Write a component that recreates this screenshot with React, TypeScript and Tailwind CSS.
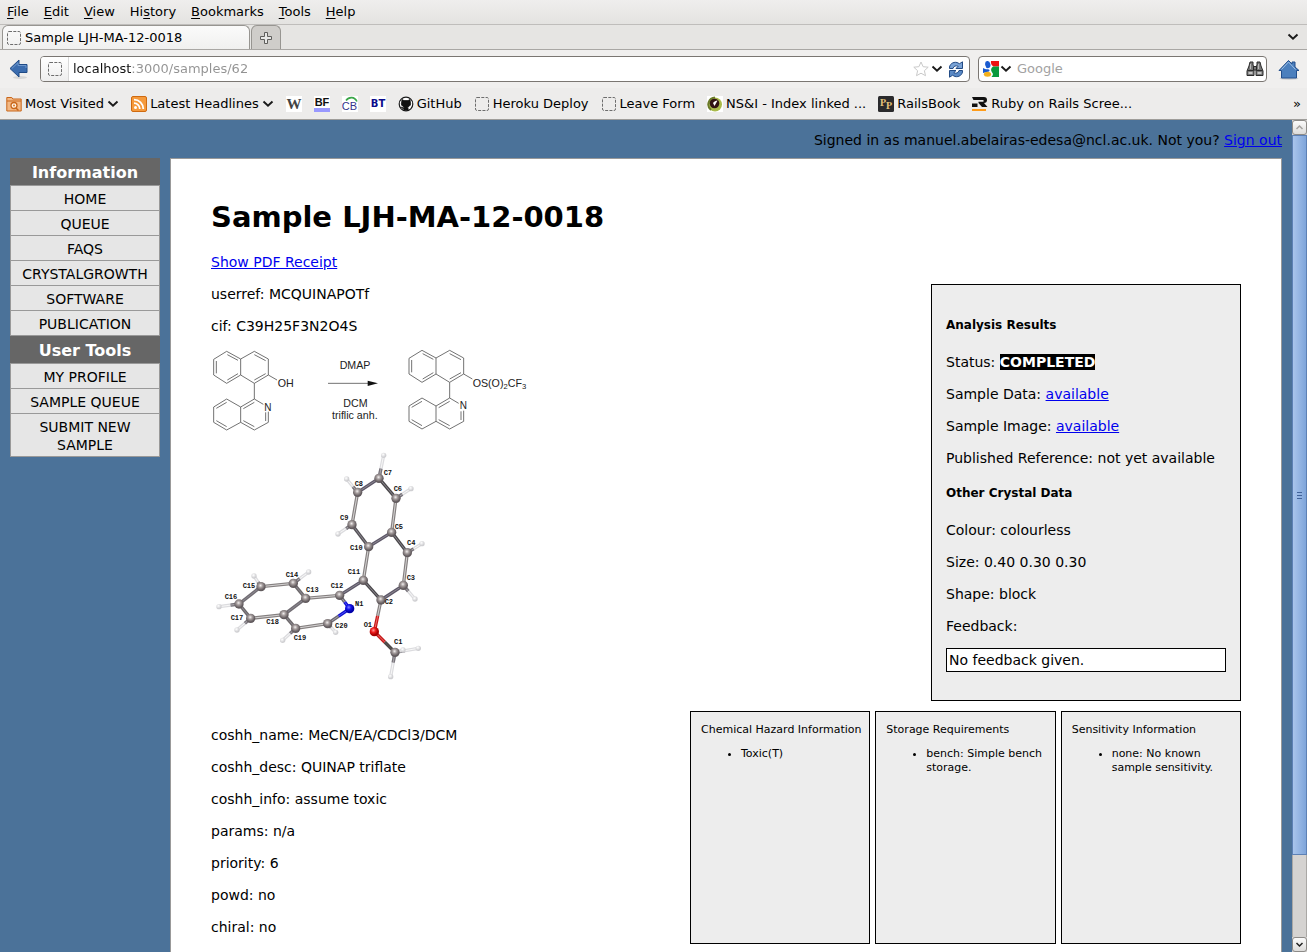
import React from "react";

type Point = [number, number];

const menus: [string, string, string][] = [
  ["", "F", "ile"],
  ["", "E", "dit"],
  ["", "V", "iew"],
  ["Hi", "s", "tory"],
  ["", "B", "ookmarks"],
  ["", "T", "ools"],
  ["", "H", "elp"],
];

function Chevron() {
  return (
    <svg width="12" height="12" viewBox="0 0 12 12" className="shrink-0">
      <path d="M1.500 3.500 6 7.800l4.500-4.300" fill="none" stroke="#1a1a1a" strokeWidth="1.900" />
    </svg>
  );
}

function DashedPage() {
  return (
    <svg width="16" height="16" viewBox="0 0 16 16" className="shrink-0">
      <rect x="1.5" y="1.5" width="13" height="13" rx="1.5" fill="none" stroke="#6d6d6d" strokeDasharray="3 1.3" />
    </svg>
  );
}

function BackIcon() {
  return (
    <svg width="20" height="22" viewBox="0 0 20 22">
      <ellipse cx="11" cy="19.5" rx="7" ry="1.5" fill="#d6d6d6" />
      <path d="M1 10.500 10 2v4.500h8v8h-8V19z" fill="#3b6cae" stroke="#1f4a86" strokeLinejoin="round" />
      <path d="M2.800 10.500 9 4.700V7.500h8V10" fill="none" stroke="#6f98cd" />
    </svg>
  );
}

function StarIcon() {
  return (
    <svg width="16" height="16" viewBox="0 0 16 16">
      <path d="m8 1 2.100 4.700 5.100.5-3.800 3.500 1.100 5L8 12.200l-4.500 2.500 1.100-5L.8 6.200l5.100-.5z" fill="#fff" stroke="#c9c9c9" strokeLinejoin="round" />
    </svg>
  );
}

function ReloadIcon() {
  return (
    <svg width="16" height="17" viewBox="0 0 16 17">
      <path d="M1.500 7.500C1 3.500 5 .5 9 1.500l2.500 1.200L14.500.8v6.700H8l2.200-2.200C8 4.200 5.500 5 5 7.500z" fill="#7aa3d6" stroke="#234b85" strokeLinejoin="round" />
      <path d="M14.500 9.500c.5 4-3.500 7-7.500 6l-2.500-1.200-3 1.900V9.500H8l-2.200 2.200c2.200 1.100 4.700.3 5.200-2.200z" fill="#5b8ac6" stroke="#234b85" strokeLinejoin="round" />
    </svg>
  );
}

function GoogleIcon() {
  return (
    <svg width="16" height="16" viewBox="0 0 16 16">
      <rect width="16" height="16" fill="#fff" />
      <path d="M8 0h8v5.500h-5.500C8.500 4.500 7.500 2 8 0" fill="#ee1111" />
      <path d="M10 5.500h6V16H8.500c2-2 1.800-3.500.3-5C7.500 9 8 7 10 5.500" fill="#0a9a3c" />
      <ellipse cx="4.800" cy="3.600" rx="2.600" ry="3.600" transform="rotate(-12 4.800 3.600)" fill="#1a5bd0" />
      <path d="M0 7c2 1.600 4 1.200 6 1.500 1 1 .5 2-1 2.300L0 12z" fill="#1a5bd0" />
      <ellipse cx="4.500" cy="13.200" rx="3.600" ry="2.500" fill="#f3b01c" />
    </svg>
  );
}

function BinocularsIcon() {
  return (
    <svg width="18" height="16" viewBox="0 0 18 16">
      <g fill="#777" stroke="#2b2b2b" strokeLinejoin="round">
        <path d="M4 1h3v3l1 2v8.500H1V10l2-5zM14 1h-3v3l-1 2v8.500h7V10l-2-5z" />
        <path d="M7.500 5.500h3V9h-3z" />
      </g>
      <path d="M1.500 9.500h6M10.500 9.500h6" stroke="#2b2b2b" />
      <path d="M2.500 12h4M11.500 12h4" stroke="#c4c4c4" strokeWidth="2" />
      <path d="M4.500 3v5M12.500 3v5" stroke="#bbb" />
    </svg>
  );
}

function HomeIcon() {
  return (
    <svg width="22" height="21" viewBox="0 0 22 21">
      <ellipse cx="11" cy="19.500" rx="9.500" ry="1.500" fill="#d2d2d2" />
      <path d="M1 11.500 10.500 1.500l3.500 3.500V3h3v5l4 3.500h-2.500V19h-15v-7.500z" fill="#4b7fbd" stroke="#234f8c" strokeLinejoin="round" />
      <path d="M3.500 10.500 10.500 3l7 7.500" fill="none" stroke="#9fc0e6" />
    </svg>
  );
}

function MostVisitedIcon() {
  return (
    <svg width="16" height="16" viewBox="0 0 16 16" className="shrink-0">
      <path d="M.8 1.500h5l1 1.500h8.400v12H.8z" fill="#f3b884" stroke="#c9661a" />
      <path d="M1 5h14" stroke="#c9661a" />
      <circle cx="8" cy="9.500" r="3" fill="#fff2e2" stroke="#c9661a" strokeWidth="1.300" />
      <path d="m10 12 2.500 2.500" stroke="#c9661a" strokeWidth="1.500" />
      <circle cx="8" cy="9.500" r="1" fill="#d97a2a" />
    </svg>
  );
}

function FeedIcon() {
  return (
    <svg width="16" height="16" viewBox="0 0 16 16" className="shrink-0">
      <rect x=".5" y=".5" width="15" height="15" rx="1.500" fill="#f59a3c" stroke="#cf6a10" />
      <circle cx="4.500" cy="11.500" r="1.500" fill="#fff" />
      <path d="M3 7.200A5.800 5.800 0 0 1 8.800 13M3 3.700A9.300 9.300 0 0 1 12.300 13" fill="none" stroke="#fff" strokeWidth="1.800" />
    </svg>
  );
}

function WikiIcon() {
  return (
    <svg width="16" height="16" viewBox="0 0 16 16" className="shrink-0">
      <rect width="16" height="16" fill="#fff" />
      <text x="8" y="13" textAnchor="middle" fontFamily="Liberation Serif, serif" fontWeight="700" fontSize="15" fill="#444">W</text>
    </svg>
  );
}

function BfIcon() {
  return (
    <svg width="16" height="16" viewBox="0 0 16 16" className="shrink-0">
      <rect width="16" height="16" fill="#fff" />
      <rect y="12" width="16" height="4" fill="#9999ff" />
      <text x="8" y="10" textAnchor="middle" fontFamily="Liberation Sans, sans-serif" fontWeight="700" fontSize="11" fill="#111">BF</text>
    </svg>
  );
}

function CbIcon() {
  return (
    <svg width="16" height="16" viewBox="0 0 16 16" className="shrink-0">
      <rect width="16" height="16" fill="#fff" />
      <path d="M4 4.500C7 .5 12.500.5 15 5.500" fill="none" stroke="#3aa648" strokeWidth="1.600" />
      <text x="7.500" y="14" textAnchor="middle" fontFamily="Liberation Sans, sans-serif" fontSize="11" fill="#33338c">CB</text>
    </svg>
  );
}

function BtIcon() {
  return (
    <svg width="16" height="16" viewBox="0 0 16 16" className="shrink-0">
      <rect width="16" height="16" fill="#fff" />
      <text x="8" y="11" textAnchor="middle" fontFamily="DejaVu Sans, sans-serif" fontWeight="700" fontSize="10" fill="#0a0a8c">BT</text>
    </svg>
  );
}

function GithubIcon() {
  return (
    <svg width="16" height="16" viewBox="0 0 16 16" className="shrink-0">
      <circle cx="8" cy="8" r="6.800" fill="#fff" stroke="#1b1b1b" strokeWidth="1.200" />
      <path d="M4 3.500 6 4.600h4l2-1.100.3 2.500c1 2.500-.3 4.500-2.800 4.900.5.500.6 1 .6 1.600V14H5.900v-1.500c-1.500.3-2-.5-2.600-1.400 1.200.2 1.300.9 2.600.6 0-.4.200-.6.500-.8C4 10.500 2.700 8.500 3.700 6z" fill="#111" stroke="#111" strokeWidth=".8" />
    </svg>
  );
}

function NsiIcon() {
  return (
    <svg width="16" height="16" viewBox="0 0 16 16" className="shrink-0">
      <rect width="16" height="16" fill="#fff" />
      <circle cx="8" cy="8.500" r="7" fill="#a9ba4a" />
      <path d="M8 1.500a7 7 0 0 0-4 12.500" fill="none" stroke="#6b7a2a" strokeWidth="2" />
      <circle cx="7.500" cy="7.500" r="4.800" fill="#321414" />
      <path d="M6 7c1-1.500 3-2.500 4.500-2.500L7.500 10z" fill="#fff" />
    </svg>
  );
}

function RailsBookIcon() {
  return (
    <svg width="16" height="16" viewBox="0 0 16 16" className="shrink-0">
      <rect width="16" height="16" rx="1.500" fill="#2a2a2c" />
      <g fontFamily="Liberation Serif, serif" fontWeight="700" fontSize="10" fill="#e3c27a">
        <text x="2" y="10">P</text>
        <text x="8" y="13">P</text>
      </g>
    </svg>
  );
}

function ScreencastIcon() {
  return (
    <svg width="16" height="16" viewBox="0 0 16 16" className="shrink-0">
      <path d="M0 1h12q3 0 3 3t-3 3l3.500 4H10L6.500 7V5.800h5V4H1.500zM0 7.500h5.500V11H0z" fill="#111" />
      <rect y="13" width="14" height="2" fill="#ff9c1a" />
    </svg>
  );
}

function Bookmark({ icon, label, menu = false }: { icon: React.ReactNode; label?: string; menu?: boolean }) {
  const inner = (
    <>
      {icon}
      {label && <span className="whitespace-nowrap">{label}</span>}
      {menu && <Chevron />}
    </>
  );
  return menu ? (
    <button type="button" className="flex items-center gap-[3px]">{inner}</button>
  ) : (
    <a href="#" aria-label={label ?? "Bookmark"} className="flex items-center gap-[3px]">{inner}</a>
  );
}

function BrowserChrome() {
  return (
    <header className="shrink-0 border-b border-[#9f9d9a] bg-[#edeceb] text-[13px] leading-4 text-black">
      <nav className="flex h-[25px] items-center gap-[15px] border-b border-[#bfbdbb] bg-linear-to-b from-[#efeeed] to-[#e4e3e1] px-[7px]">
        {menus.map(([pre, key, post]) => (
          <button type="button" key={pre + key + post}>
            {pre}
            <span className="underline underline-offset-2">{key}</span>
            {post}
          </button>
        ))}
      </nav>
      <div className="flex h-[25px] items-end border-b border-[#a9a7a4] bg-[#e6e5e3] pl-0.5">
        <button type="button" className="flex h-6 w-[248px] items-center gap-[3px] rounded-t-md border border-b-0 border-[#979591] bg-linear-to-b from-[#fbfbfb] to-[#f0f0ef] pl-[3px]">
          <DashedPage />
          Sample LJH-MA-12-0018
        </button>
        <button type="button" aria-label="New tab" className="ml-px flex h-6 w-[30px] items-center justify-center rounded-t-md border border-b-0 border-[#979591] bg-[#cfcdca]">
          <svg width="14" height="14" viewBox="0 0 14 14">
            <path d="M5.500 1.500h3v4h4v3h-4v4h-3v-4h-4v-3h4z" fill="#e8e8e7" stroke="#5f5e5c" />
          </svg>
        </button>
        <button type="button" aria-label="List tabs" className="mr-2 ml-auto self-center">
          <Chevron />
        </button>
      </div>
      <div className="flex h-[38px] items-center bg-[#f0efee] pr-[7px] pl-[9px]">
        <button type="button" aria-label="Back" className="mr-[11px]">
          <BackIcon />
        </button>
        <div className="mr-2 flex h-[26px] flex-1 items-center overflow-hidden rounded-[4px] border border-[#7a7672] bg-white pr-[5px]">
          <span className="flex h-full w-7 items-center justify-center border-r border-[#d8d8d8] bg-linear-to-b from-white to-[#eee]">
            <DashedPage />
          </span>
          <input
            aria-label="Address"
            defaultValue="localhost:3000/samples/62"
            className="ml-1 min-w-0 flex-1 bg-[linear-gradient(90deg,#111_59px,#929292_59px)] bg-clip-text text-transparent outline-none"
          />
          <button type="button" aria-label="Bookmark this page"><StarIcon /></button>
          <button type="button" aria-label="Show history" className="mr-[5px] ml-0.5"><Chevron /></button>
          <button type="button" aria-label="Reload"><ReloadIcon /></button>
        </div>
        <div className="mr-[11px] flex h-[26px] w-[289px] items-center rounded-[4px] border border-[#7a7672] bg-white pr-0.5 pl-1">
          <GoogleIcon />
          <button type="button" aria-label="Search engine" className="mr-[5px] ml-px"><Chevron /></button>
          <input aria-label="Search" placeholder="Google" className="min-w-0 flex-1 outline-none placeholder:text-[#a2a2a2]" />
          <button type="button" aria-label="Search"><BinocularsIcon /></button>
        </div>
        <button type="button" aria-label="Home"><HomeIcon /></button>
      </div>
      <div className="flex h-[31px] items-center gap-3 px-1.5">
        <Bookmark icon={<MostVisitedIcon />} label="Most Visited" menu />
        <Bookmark icon={<FeedIcon />} label="Latest Headlines" menu />
        <Bookmark icon={<WikiIcon />} />
        <Bookmark icon={<BfIcon />} />
        <Bookmark icon={<CbIcon />} />
        <Bookmark icon={<BtIcon />} />
        <Bookmark icon={<GithubIcon />} label="GitHub" />
        <Bookmark icon={<DashedPage />} label="Heroku Deploy" />
        <Bookmark icon={<DashedPage />} label="Leave Form" />
        <Bookmark icon={<NsiIcon />} label="NS&I - Index linked ..." />
        <Bookmark icon={<RailsBookIcon />} label="RailsBook" />
        <Bookmark icon={<ScreencastIcon />} label="Ruby on Rails Scree..." />
        <button type="button" aria-label="More bookmarks" className="ml-auto">»</button>
      </div>
    </header>
  );
}

function MenuGroup({ title, items }: { title: string; items: string[] }) {
  return (
    <section>
      <h2 className="bg-[#666] pt-[5px] pb-[3px] text-center text-base leading-[19px] font-bold text-white">{title}</h2>
      <ul className="border-x border-b border-[#999] bg-[#e6e6e6] text-center">
        {items.map((item) => (
          <li key={item} className="border-t border-[#999] px-3 pt-1 pb-0.5">
            <a href="#" className="flex justify-center">{item}</a>
          </li>
        ))}
      </ul>
    </section>
  );
}

const skeleton =
  "M41 58 80 34 122 57V105L80 130 41 105zM122 57 163 34 205 57V105L163 130 122 105M163 130V177M190 193 163 177 122 201V247L163 270 205 247V215M122 201 80 177 41 201V247L80 270 122 247M205 105 231 120" +
  "M49 63V100M82 44 114 61M82 120 114 101M163 44 197 62M163 120 197 101M49 205 80 187M49 242 80 260M163 187 130 206M197 217V243M163 260 130 242";

function ReactionScheme() {
  return (
    <svg className="h-[84px] w-80" viewBox="33 27 960 252" role="img" aria-label="Reaction scheme">
      <g fill="none" stroke="#555" strokeWidth="2.500">
        <path d={skeleton} />
        <path d={skeleton} transform="translate(586 -3)" />
        <path d="M384 130H510" />
      </g>
      <path d="M503 122 534 130 503 138z" fill="#111" />
      <g fontFamily="Liberation Sans, sans-serif" fontSize="32" fill="#222">
        <text x="233" y="140">OH</text>
        <text x="193" y="212" fontSize="30">N</text>
        <text x="779" y="208" fontSize="30">N</text>
        <text x="419" y="87">DMAP</text>
        <text x="430" y="201">DCM</text>
        <text x="396" y="238">triflic anh.</text>
        <text x="818" y="140">
          OS(O)<tspan dy="8" fontSize="23">2</tspan><tspan dy="-8">CF</tspan><tspan dy="8" fontSize="23">3</tspan>
        </text>
      </g>
    </svg>
  );
}

const atoms: Record<string, { at: Point; label: Point }> = {
  C7: { at: [492, 85], label: [506, 75] },
  C8: { at: [428, 127], label: [419, 108] },
  C6: { at: [543, 145], label: [536, 123] },
  C9: { at: [411, 224], label: [375, 211] },
  C10: { at: [461, 290], label: [405, 299] },
  C5: { at: [530, 247], label: [539, 236] },
  C4: { at: [577, 308], label: [576, 284] },
  C3: { at: [565, 406], label: [575, 390] },
  C11: { at: [445, 391], label: [398, 373] },
  C2: { at: [498, 450], label: [509, 461] },
  C12: { at: [374, 436], label: [347, 415] },
  C13: { at: [272, 445], label: [273, 425] },
  C14: { at: [235, 400], label: [212, 382] },
  C15: { at: [138, 410], label: [83, 413] },
  C16: { at: [72, 462], label: [29, 447] },
  C17: { at: [107, 505], label: [47, 509] },
  C18: { at: [207, 494], label: [154, 522] },
  C19: { at: [242, 535], label: [236, 570] },
  C20: { at: [338, 521], label: [360, 533] },
  N1: { at: [404, 476], label: [420, 467] },
  O1: { at: [478, 545], label: [446, 532] },
  C1: { at: [540, 607], label: [537, 583] },
};

const bonds: [string, string, string][] = [
  ["C7", "C8", "#5d5768"],
  ["C7", "C6", "#4a484a"],
  ["C8", "C9", "#858080"],
  ["C9", "C10", "#555257"],
  ["C10", "C5", "#5d5768"],
  ["C5", "C6", "#858080"],
  ["C5", "C4", "#4a484a"],
  ["C4", "C3", "#858080"],
  ["C3", "C2", "#5d5768"],
  ["C2", "C11", "#4a484a"],
  ["C11", "C10", "#858080"],
  ["C11", "C12", "#5d5768"],
  ["C12", "C13", "#858080"],
  ["C13", "C14", "#6d696b"],
  ["C14", "C15", "#858080"],
  ["C15", "C16", "#716d73"],
  ["C16", "C17", "#6d696b"],
  ["C17", "C18", "#858080"],
  ["C18", "C13", "#716d73"],
  ["C18", "C19", "#6d696b"],
  ["C19", "C20", "#858080"],
];

const hydrogens: [string, Point][] = [
  ["C7", [506, 16]],
  ["C8", [395, 87]],
  ["C6", [588, 116]],
  ["C9", [369, 252]],
  ["C4", [621, 281]],
  ["C3", [600, 447]],
  ["C14", [281, 366]],
  ["C15", [117, 378]],
  ["C16", [12, 470]],
  ["C17", [66, 540]],
  ["C19", [203, 571]],
  ["C20", [362, 547]],
  ["C1", [610, 595]],
  ["C1", [527, 680]],
  ["C1", [564, 600]],
];

function Segment({ from, to, color, shine = "#c9c6c6" }: { from: Point; to: Point; color: string; shine?: string }) {
  const d = `M${from[0]} ${from[1]}L${to[0]} ${to[1]}`;
  return (
    <>
      <path d={d} stroke={color} strokeWidth="10" />
      <path d={d} stroke={shine} strokeWidth="3" />
    </>
  );
}

function toward(a: Point, b: Point, t: number): Point {
  return [a[0] + (b[0] - a[0]) * t, a[1] + (b[1] - a[1]) * t];
}

function CrystalStructure() {
  const shineFor = (color: string) => (color === "#858080" ? "#d6d4d4" : "#8b8790");
  const { C12, C20, N1, O1, C1, C2 } = atoms;
  const halves: [Point, Point, string, string][] = [
    [C12.at, N1.at, "#6a6670", "#a5a2a8"],
    [C20.at, N1.at, "#6a6670", "#a5a2a8"],
    [C2.at, O1.at, "#858080", "#d6d4d4"],
    [C1.at, O1.at, "#4a4644", "#5a5654"],
  ];
  return (
    <svg className="mt-3 h-[267px] w-[220px]" viewBox="-12 -15 660 801" role="img" aria-label="Crystal structure">
      <defs>
        <radialGradient id="carbon" cx="45%" cy="38%">
          <stop offset="0" stopColor="#f2efef" />
          <stop offset=".45" stopColor="#a39b9b" />
          <stop offset="1" stopColor="#625b5e" />
        </radialGradient>
        <radialGradient id="hydrogen" cx="40%" cy="35%">
          <stop offset="0" stopColor="#ffffff" />
          <stop offset="1" stopColor="#cfcfd2" />
        </radialGradient>
        <radialGradient id="nitrogen" cx="40%" cy="35%">
          <stop offset="0" stopColor="#8080ff" />
          <stop offset=".5" stopColor="#1414ee" />
          <stop offset="1" stopColor="#0000a8" />
        </radialGradient>
        <radialGradient id="oxygen" cx="40%" cy="35%">
          <stop offset="0" stopColor="#ff9a9a" />
          <stop offset=".5" stopColor="#ee1c1c" />
          <stop offset="1" stopColor="#a80000" />
        </radialGradient>
      </defs>
      {hydrogens.map(([carbon, at], i) => (
        <React.Fragment key={i}>
          <Segment from={atoms[carbon].at} to={at} color="#dcdcdf" shine="#f8f8f8" />
          <Segment from={atoms[carbon].at} to={toward(atoms[carbon].at, at, 0.42)} color="#77737a" shine="#a9a6aa" />
          <circle cx={at[0]} cy={at[1]} r="8" fill="url(#hydrogen)" />
        </React.Fragment>
      ))}
      {bonds.map(([a, b, color]) => (
        <Segment key={a + b} from={atoms[a].at} to={atoms[b].at} color={color} shine={shineFor(color)} />
      ))}
      {halves.map(([carbon, hetero, color, shine], i) => (
        <React.Fragment key={i}>
          <Segment from={carbon} to={toward(carbon, hetero, 0.5)} color={color} shine={shine} />
          <Segment
            from={toward(carbon, hetero, 0.5)}
            to={hetero}
            color={i < 2 ? "#1212cc" : "#c41818"}
            shine={i < 2 ? "#4a4aff" : "#f06a6a"}
          />
        </React.Fragment>
      ))}
      {Object.entries(atoms).map(([name, { at }]) => (
        <circle
          key={name}
          cx={at[0]}
          cy={at[1]}
          r="14"
          fill={name === "N1" ? "url(#nitrogen)" : name === "O1" ? "url(#oxygen)" : "url(#carbon)"}
        />
      ))}
      <g fontFamily="Liberation Mono, monospace" fontWeight="700" fontSize="21" fill="#111">
        {Object.entries(atoms).map(([name, { label }]) => (
          <text key={name} x={label[0]} y={label[1]}>{name}</text>
        ))}
      </g>
    </svg>
  );
}

function Link({ children }: { children: React.ReactNode }) {
  return <a href="#" className="text-[#0000ee] underline">{children}</a>;
}

function InfoBox({ title, items }: { title: string; items: string[] }) {
  return (
    <section className="h-[233px] border border-black bg-[#ededed] py-[11px] pr-1 pl-2.5 text-[11px] leading-[14px]">
      <h3>{title}</h3>
      <ul className="mt-2.5 list-disc pl-10">
        {items.map((item) => <li key={item}>{item}</li>)}
      </ul>
    </section>
  );
}

function AnalysisPanel() {
  return (
    <section className="w-[310px] border border-black bg-[#ededed] px-3.5 pt-[33px] pb-7">
      <h3 className="text-xs leading-[15px] font-bold">Analysis Results</h3>
      <div className="mt-5 space-y-3.5">
        <p>Status: <strong className="bg-black text-white">COMPLETED</strong></p>
        <p>Sample Data: <Link>available</Link></p>
        <p>Sample Image: <Link>available</Link></p>
        <p>Published Reference: not yet available</p>
      </div>
      <h3 className="mt-[19px] text-xs leading-[15px] font-bold">Other Crystal Data</h3>
      <div className="mt-5 space-y-3.5">
        <p>Colour: colourless</p>
        <p>Size: 0.40 0.30 0.30</p>
        <p>Shape: block</p>
        <p>Feedback:</p>
      </div>
      <p className="mt-[13px] border border-black bg-white p-0.5">No feedback given.</p>
    </section>
  );
}

function Scrollbar() {
  const cap = "flex h-[15px] shrink-0 items-center justify-center rounded-[3px] border border-[#8d8b88] bg-linear-to-b from-[#fbfbfb] to-[#dddcda]";
  return (
    <div className="flex w-[15px] shrink-0 flex-col bg-[#d5d3d1]">
      <button type="button" aria-label="Scroll up" className={cap}>
        <svg width="9" height="9" viewBox="0 0 9 9"><path d="M1.500 6 4.500 3l3 3" fill="none" stroke="#a5a3a0" strokeWidth="1.500" /></svg>
      </button>
      <div className="flex flex-[720] flex-col items-center justify-center gap-0.5 border border-[#5d81b5] bg-linear-to-r from-[#a9c5ec] to-[#7fa5da]">
        <span className="h-px w-[5px] bg-[#41639a]" />
        <span className="h-px w-[5px] bg-[#41639a]" />
        <span className="h-px w-[5px] bg-[#41639a]" />
      </div>
      <div className="flex-[82] border-x border-[#aaa8a5]" />
      <button type="button" aria-label="Scroll down" className={cap}>
        <svg width="9" height="9" viewBox="0 0 9 9"><path d="M1.500 3 4.500 6l3-3" fill="none" stroke="#222" strokeWidth="1.500" /></svg>
      </button>
    </div>
  );
}

export default function App() {
  return (
    <div className="flex h-screen flex-col overflow-hidden font-['DejaVu_Sans',sans-serif]">
      <BrowserChrome />
      <div className="flex min-h-0 flex-1">
        <div className="flex min-w-0 flex-1 flex-col overflow-hidden bg-[#4b7299] px-2.5 text-sm leading-[18px] text-black">
          <p className="shrink-0 pt-[11px] pb-[9px] text-right">
            Signed in as manuel.abelairas-edesa@ncl.ac.uk. Not you? <Link>Sign out</Link>
          </p>
          <div className="flex flex-1 gap-2.5">
            <aside className="w-[150px] shrink-0">
              <MenuGroup title="Information" items={["HOME", "QUEUE", "FAQS", "CRYSTALGROWTH", "SOFTWARE", "PUBLICATION"]} />
              <MenuGroup title="User Tools" items={["MY PROFILE", "SAMPLE QUEUE", "SUBMIT NEW SAMPLE"]} />
            </aside>
            <main className="min-w-0 flex-1 border border-b-0 border-[#999] bg-white px-10 pt-10">
              <h1 className="text-[29px] leading-9 font-bold">Sample LJH-MA-12-0018</h1>
              <p className="mt-[18px]"><Link>Show PDF Receipt</Link></p>
              <div className="mt-[13px] flex items-start">
                <div className="min-w-0 flex-1 pt-px">
                  <div className="space-y-3.5">
                    <p>userref: MCQUINAPOTf</p>
                    <p>cif: C39H25F3N2O4S</p>
                    <ReactionScheme />
                  </div>
                  <CrystalStructure />
                  <div className="mt-3.5 space-y-3.5">
                    <p>coshh_name: MeCN/EA/CDCl3/DCM</p>
                    <p>coshh_desc: QUINAP triflate</p>
                    <p>coshh_info: assume toxic</p>
                    <p>params: n/a</p>
                    <p>priority: 6</p>
                    <p>powd: no</p>
                    <p>chiral: no</p>
                  </div>
                </div>
                <div className="flex w-[551px] shrink-0 flex-col items-end gap-2.5">
                  <AnalysisPanel />
                  <div className="grid w-full grid-cols-3 gap-[5px]">
                    <InfoBox title="Chemical Hazard Information" items={["Toxic(T)"]} />
                    <InfoBox title="Storage Requirements" items={["bench: Simple bench storage."]} />
                    <InfoBox title="Sensitivity Information" items={["none: No known sample sensitivity."]} />
                  </div>
                </div>
              </div>
            </main>
          </div>
        </div>
        <Scrollbar />
      </div>
    </div>
  );
}
